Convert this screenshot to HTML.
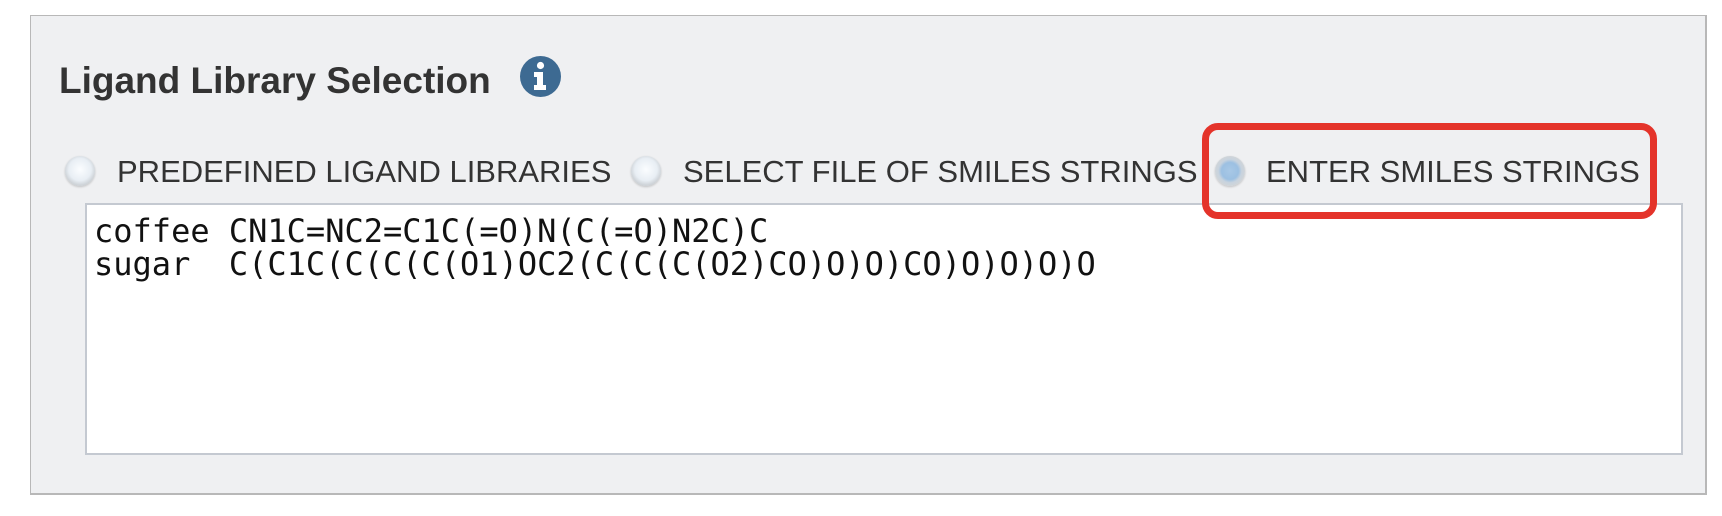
<!DOCTYPE html>
<html><head><meta charset="utf-8"><style>
body{margin:0;width:1722px;height:516px;background:#fff;position:relative;overflow:hidden;font-family:"Liberation Sans",Arial,sans-serif;}
.panel{position:absolute;left:30px;top:15px;width:1677px;height:480px;background:#eff0f2;border:1px solid #b8b8b8;border-right-width:2px;border-bottom-width:2px;box-sizing:border-box;}
.title{position:absolute;left:59px;top:59px;font-size:37px;font-weight:bold;color:#333;white-space:nowrap;line-height:44px;}
.info{position:absolute;left:520px;top:56px;width:41px;height:41px;}
.radio{position:absolute;width:30px;height:30px;border-radius:50%;top:156px;background:radial-gradient(circle at 50% 45%,#fbfdff 0%,#e8eef4 50%,#d0d5da 68%,#b4b8bc 100%);box-shadow:0 1px 2px rgba(0,0,0,.2);}
.radio.sel{background:radial-gradient(circle,#a8c8e6 0%,#9cc0e2 40%,#c8d3de 55%,#d0d4d8 72%,#b0b4b8 100%);}
.lbl{position:absolute;top:154px;font-size:31px;color:#333;white-space:nowrap;line-height:36px;}
.ta{position:absolute;left:85px;top:203px;width:1598px;height:252px;background:#fff;border:2px solid #c4c9d1;box-sizing:border-box;}
.mono{position:absolute;left:94px;top:215px;font-family:"DejaVu Sans Mono","Liberation Mono",monospace;font-size:32px;line-height:33px;color:#111;white-space:pre;}
.red{position:absolute;left:1202px;top:123px;width:455px;height:96px;border:7px solid #e4332a;border-radius:16px;box-sizing:border-box;}
</style></head><body>
<div class="panel"></div>
<div class="title">Ligand Library Selection</div>
<svg class="info" viewBox="0 0 41 41"><circle cx="20.5" cy="20.5" r="20.5" fill="#3d6a92"/><circle cx="20.5" cy="9.5" r="3.6" fill="#fff"/><path d="M14 16h9v13h3v5H14v-5h3v-8h-3z" fill="#fff"/></svg>
<div class="radio" style="left:65px"></div>
<div class="lbl" style="left:117px">PREDEFINED LIGAND LIBRARIES</div>
<div class="radio" style="left:631px"></div>
<div class="lbl" style="left:683px">SELECT FILE OF SMILES STRINGS</div>
<div class="radio sel" style="left:1215px"></div>
<div class="lbl" style="left:1266px">ENTER SMILES STRINGS</div>
<div class="ta"></div>
<div class="mono">coffee CN1C=NC2=C1C(=O)N(C(=O)N2C)C
sugar  C(C1C(C(C(C(O1)OC2(C(C(C(O2)CO)O)O)CO)O)O)O)O</div>
<div class="red"></div>
</body></html>
